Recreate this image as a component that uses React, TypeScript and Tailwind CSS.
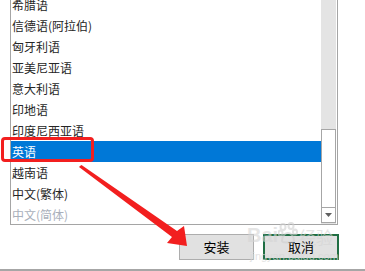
import React from "react";

const items = [
  "希腊语",
  "信德语(阿拉伯)",
  "匈牙利语",
  "亚美尼亚语",
  "意大利语",
  "印地语",
  "印度尼西亚语",
  "英语",
  "越南语",
  "中文(繁体)",
  "中文(简体)",
];

export default function App() {
  return (
    <div
      className="relative w-[365px] h-[271px] bg-white overflow-hidden text-[12px]"
      style={{ fontFamily: '"Noto Sans CJK SC", "Noto Sans", sans-serif' }}
    >
      {/* list box */}
      <div className="ml-[10px] w-[328px] h-[225px] border-l border-r border-b border-[#a5a5a5] flex">
        <div className="flex-1 overflow-hidden">
          <div className="-mt-[6px] flex flex-col">
            {items.map((t, i) => {
              const sel = t === "英语";
              const faded = i === items.length - 1;
              return (
                <div
                  key={t}
                  className={
                    sel
                      ? "h-[21px] leading-[21px] pl-[1px] bg-[#0078d7] text-white"
                      : faded
                      ? "h-[21px] leading-[21px] pl-[1px] text-[#a9b0bb]"
                      : "h-[21px] leading-[21px] pl-[1px] text-[#262626]"
                  }
                >
                  {t}
                </div>
              );
            })}
          </div>
        </div>
        {/* scrollbar */}
        <div className="w-[16px] pr-[1px] bg-white flex flex-col">
          <div className="w-[15px] flex-1 bg-[#e4e4e4] flex flex-col">
            <div className="h-[129px]" />
            <div className="h-[79px] border border-[#a6a6a6] bg-white" />
            <div className="h-[15px] border border-t-0 border-[#a6a6a6] bg-white flex items-center justify-center">
              <svg width="7" height="4" viewBox="0 0 7 4">
                <polygon points="0,0 7,0 3.5,4" fill="#606060" />
              </svg>
            </div>
            <div className="flex-1" />
          </div>
        </div>
      </div>

      {/* buttons */}
      <div className="mt-[9px] flex justify-end gap-[9px] pr-[26px]">
        <div className="w-[75px] h-[26px] bg-[#e1e1e1] border border-[#adadad] flex items-center justify-center text-[13px] text-black">
          安装
        </div>
        <div className="w-[76px] h-[26px] bg-[#e1e1e1] border-2 border-[#1f6e43] flex items-center justify-center text-[13px] text-black">
          取消
        </div>
      </div>

      {/* bottom separator */}
      <div className="mt-[9px] h-[2px] bg-[#a6a6a6]" />

      {/* watermark */}
      <div className="absolute left-[247px] top-[222px] flex items-end opacity-60 pointer-events-none">
        <span
          className="text-[20px] font-bold leading-none text-[#d4d4d4]"
          style={{ fontFamily: '"Liberation Sans", sans-serif' }}
        >
          Bai
        </span>
        <svg width="20" height="22" viewBox="0 0 20 22" className="mb-[1px]">
          <g fill="none" stroke="#cfcfcf" strokeWidth="2">
            <ellipse cx="5" cy="5" rx="2.5" ry="3" />
            <ellipse cx="13" cy="4" rx="2.5" ry="3" />
            <ellipse cx="2.5" cy="11" rx="2" ry="2.5" />
            <ellipse cx="17" cy="10" rx="2" ry="2.5" />
            <path d="M4 19 C4 13 8 11 10 11 C12 11 16 13 16 19 C16 21 4 21 4 19 Z" />
          </g>
        </svg>
        <span className="text-[17px] leading-none text-[#d4d4d4] ml-[1px]">经验</span>
      </div>
      <div
        className="absolute left-[250px] top-[251px] text-[11px] leading-none text-[#d8d8d8] opacity-70 pointer-events-none"
        style={{ fontFamily: '"Liberation Sans", sans-serif' }}
      >
        jingyan.baidu.com
      </div>

      {/* red highlight box */}
      <div className="absolute left-[1px] top-[137px] w-[93px] h-[25px] border-[3px] border-[#f21f1f] rounded-[4px] pointer-events-none" />

      {/* red arrow */}
      <svg
        className="absolute left-0 top-0 pointer-events-none"
        width="365"
        height="271"
        viewBox="0 0 365 271"
      >
        <polygon
          points="80,166 81.5,165 177,231 184,226 187,246 167,243 172,237 79,167"
          fill="#f21f1f"
        />
      </svg>
    </div>
  );
}
